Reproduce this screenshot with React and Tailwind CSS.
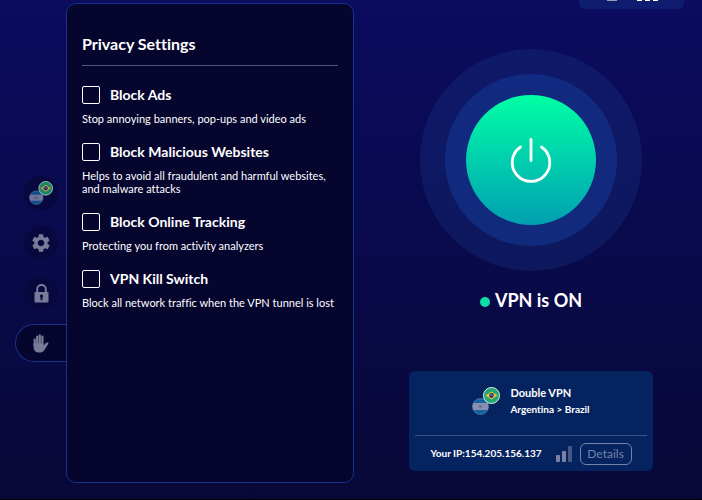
import { useState } from 'react'
import clsx from 'clsx'
import { MdSettings } from 'react-icons/md'

const settings = [
  { id: 'ads', label: 'Block Ads', text: 'Stop annoying banners, pop-ups and video ads' },
  {
    id: 'malicious',
    label: 'Block Malicious Websites',
    text: 'Helps to avoid all fraudulent and harmful websites, and malware attacks',
  },
  { id: 'tracking', label: 'Block Online Tracking', text: 'Protecting you from activity analyzers' },
  { id: 'kill', label: 'VPN Kill Switch', text: 'Block all network traffic when the VPN tunnel is lost' },
]

// Argentina behind, Brazil in front
function Flags({ className }) {
  return (
    <svg viewBox="0 0 28 28" className={className} aria-hidden="true">
      <defs>
        <clipPath id="ar">
          <circle cx="8.5" cy="19.5" r="8" />
        </clipPath>
      </defs>
      <g clipPath="url(#ar)">
        <rect x="0" y="11" width="17" height="17" fill="#1263a3" />
        <rect x="0" y="16" width="17" height="7" fill="#8b8fae" />
      </g>
      <circle cx="8.5" cy="19.5" r="1.5" fill="#6d7295" />
      <path d="M6 19.500h5M8.500 17.500v4" stroke="#6d7295" strokeWidth=".7" />
      <circle cx="8.5" cy="19.5" r="8" fill="none" stroke="#6f86b3" strokeWidth=".6" />
      <circle cx="19.5" cy="8.5" r="8" fill="#1fa673" stroke="#e3efec" strokeWidth="1" />
      <path d="M13.500 8.500l6-4 6 4-6 4z" fill="#f0c23c" />
      <circle cx="19.5" cy="8.5" r="2.400" fill="#23306b" />
      <path d="M17.400 8q2.200-.6 4 1" stroke="#e8e8f0" strokeWidth=".5" fill="none" />
    </svg>
  )
}

function LockIcon() {
  return (
    <svg viewBox="0 0 15 19" className="h-[19px] w-[15px]" aria-hidden="true">
      <path d="M3.200 9V5.200a4.300 4.300 0 0 1 8.600 0V9" fill="none" stroke="currentColor" strokeWidth="2" />
      <path
        fillRule="evenodd"
        fill="currentColor"
        d="M1.500 8h12q1 0 1 1v8.500q0 1-1 1h-12q-1 0-1-1V9q0-1 1-1zM7.500 10.600a1.700 1.700 0 0 0-.9 3.100v2.500h1.800v-2.500a1.700 1.700 0 0 0-.9-3.100z"
      />
    </svg>
  )
}

function HandIcon() {
  return (
    <svg viewBox="0 0 16 19" className="h-[19px] w-4" fill="none" stroke="currentColor" strokeLinecap="round" aria-hidden="true">
      <path strokeWidth="2.200" d="M1.700 5.500v6M4.200 2.700v8M6.800 1.400v9M9.400 2.500v8" />
      <path
        fill="currentColor"
        stroke="none"
        d="M.6 9.500h9.900v2.200l2.300-2.600q1-1 2.300-.5.6.4.2 1.100l-3.700 6q-1.700 2.900-5.500 2.900-5.500 0-5.500-5.600z"
      />
    </svg>
  )
}

function NavItem({ label, active, children }) {
  return (
    <button
      aria-label={label}
      className={clsx(
        'flex items-center text-[#7a7a99]',
        active
          ? 'h-[38px] w-[51px] rounded-l-full border border-r-0 border-[#15338c] bg-[#05052e] pl-[17px]'
          : 'mr-2 h-[34px] w-[34px] justify-center rounded-full bg-[#08083f]'
      )}
    >
      {children}
    </button>
  )
}

function SettingRow({ item, checked, onChange }) {
  return (
    <li>
      <div className="flex h-[18px] items-center gap-2.5">
        <input
          id={item.id}
          type="checkbox"
          checked={checked}
          onChange={onChange}
          className="h-[18px] w-[18px] appearance-none rounded-xs border border-white checked:bg-[#00e0a0]"
        />
        <label htmlFor={item.id} className="text-sm font-bold leading-[18px]">
          {item.label}
        </label>
      </div>
      <p className="mt-2 text-[11px] leading-[13px]">{item.text}</p>
    </li>
  )
}

export default function App() {
  const [checked, setChecked] = useState({})
  const [on, setOn] = useState(true)

  const toggle = (id) => setChecked((c) => ({ ...c, [id]: !c[id] }))

  return (
    <main className="flex min-h-screen overflow-hidden border-b border-black bg-linear-to-b from-[#0b0b60] to-[#080838] font-['Lato',sans-serif] text-white [font-variant-ligatures:none]">
      <nav className="flex w-[66px] shrink-0 flex-col items-end gap-4 pt-[176px]">
        <NavItem label="Servers">
          <Flags className="h-6 w-6 opacity-80" />
        </NavItem>
        <NavItem label="Settings">
          <MdSettings size={22} />
        </NavItem>
        <NavItem label="Security">
          <LockIcon />
        </NavItem>
        <div className="-mt-0.5">
          <NavItem label="Privacy" active>
            <HandIcon />
          </NavItem>
        </div>
      </nav>

      <section className="mt-[3px] mb-4 w-[288px] shrink-0 rounded-[10px] border border-[#15338c] bg-[#05052e] px-[15px] pt-[30px]">
        <h1 className="border-b border-[#55557a] pb-[11px] text-base font-bold leading-5">Privacy Settings</h1>
        <ul className="mt-5 flex flex-col gap-[18px]">
          {settings.map((item) => (
            <SettingRow key={item.id} item={item} checked={!!checked[item.id]} onChange={() => toggle(item.id)} />
          ))}
        </ul>
      </section>

      <section className="flex grow flex-col pr-[49px] pl-[55px]">
        <div className="-mr-[31px] flex h-[9px] w-[105px] items-start gap-[3px] self-end rounded-b-md bg-[#0d1c6e] pl-7">
          <span className="mr-[17px] h-px w-2.5 bg-[#9a9db8]" />
          <span className="h-px w-[5px] bg-white" />
          <span className="h-px w-[5px] bg-white" />
          <span className="h-px w-[5px] bg-white" />
        </div>

        <div className="mt-10 flex h-[222px] w-[222px] items-center justify-center self-center rounded-full bg-[#1a3c8c]/30">
          <div className="flex h-[172px] w-[172px] items-center justify-center rounded-full bg-[#1640a0]/45">
            <button
              aria-label="Toggle VPN"
              onClick={() => setOn(!on)}
              className="flex h-[130px] w-[130px] items-center justify-center rounded-full bg-linear-to-b from-[#00ffa3] to-[#00a0b0]"
            >
              <svg viewBox="0 0 44 48" className="h-12 w-11" fill="none" stroke="white" strokeWidth="2.800" strokeLinecap="round">
                <path d="M22 3.500V24.500" />
                <path d="M11.500 11A18.800 18.800 0 1 0 32.500 11" />
              </svg>
            </button>
          </div>
        </div>

        <div className="mt-[17px] flex items-center justify-center gap-[5px]">
          <span className="mt-1 h-2.5 w-2.5 rounded-full bg-[#0de0a5]" />
          <p className="text-lg font-bold leading-6">{on ? 'VPN is ON' : 'VPN is OFF'}</p>
        </div>

        <div className="mt-[59px] rounded-md bg-[#05245f] px-1.5">
          <div className="flex h-[65px] items-center justify-center gap-[10px] border-b border-[#3a5488] pb-1">
            <Flags className="h-7 w-7" />
            <div>
              <h2 className="text-[11px] font-bold leading-4">Double VPN</h2>
              <p className="text-[10px] font-bold leading-4">Argentina &gt; Brazil</p>
            </div>
          </div>
          <div className="flex h-[35px] items-center justify-center">
            <p className="text-[10px] font-bold">Your IP:154.205.156.137</p>
            <svg viewBox="0 0 16 16" className="ml-3.5 h-4 w-4" aria-hidden="true">
              <rect x="0" y="9" width="4" height="7" rx="1" fill="#7b82a3" />
              <rect x="6" y="5" width="4" height="11" rx="1" fill="#7b82a3" />
              <rect x="12" y="0" width="4" height="16" rx="1" fill="#465687" />
            </svg>
            <button className="ml-2 h-[22px] w-[52px] rounded-md border border-[#7483a6] text-xs text-[#7483a6]">
              Details
            </button>
          </div>
        </div>
      </section>
    </main>
  )
}
